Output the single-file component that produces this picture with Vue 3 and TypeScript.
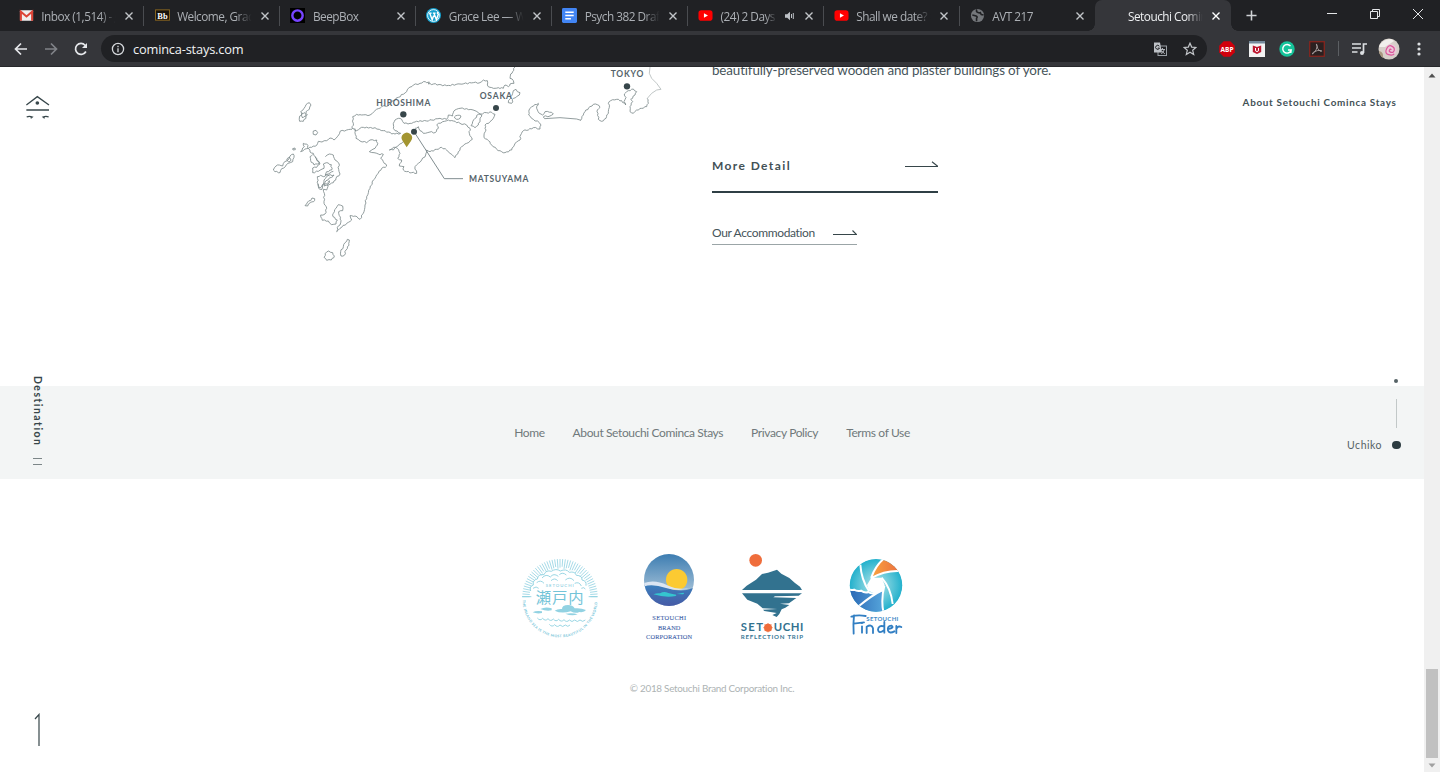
<script setup lang="ts">
interface Tab {
  title: string
  icon: string
  active?: boolean
  audio?: boolean
}

const tabs: Tab[] = [
  { title: 'Inbox (1,514) - g', icon: 'gmail' },
  { title: 'Welcome, Grace', icon: 'bb' },
  { title: 'BeepBox', icon: 'beep' },
  { title: 'Grace Lee — Wo', icon: 'wp' },
  { title: 'Psych 382 Draft', icon: 'docs' },
  { title: '(24) 2 Days', icon: 'yt', audio: true },
  { title: 'Shall we date? O', icon: 'yt' },
  { title: 'AVT 217', icon: 'globe' },
  { title: 'Setouchi Cominca', icon: 'none', active: true },
]

const footerLinks = ['Home', 'About Setouchi Cominca Stays', 'Privacy Policy', 'Terms of Use']

// Coastlines as rough vertices; coast() adds the small bays between them.
const coasts: string[] = [
  '276,205 280,190 278,170 290,163 305,165 330,165 345,152 365,140 385,137 400,122 415,112 440,95 445,85 460,75 480,70 490,65 500,68 508,66 505,72 520,72 560,77 600,72 640,68 660,68 670,60 682,62 682,75 690,82 700,85 715,83 730,85 735,75 745,80 750,72 762,70 760,62 750,55 752,42 758,35 765,21',
  '755,130 745,128 752,110 758,100 760,92 768,88 772,95 780,98 778,105 770,110 760,115 755,130',
  '276,205 290,212 300,205 310,202 325,204 345,203 358,208 370,212 385,216 395,222 405,222 422,220 405,212 400,205 400,190 405,180 415,175 425,178 432,190 450,190 465,186 480,182 500,183 515,180 540,175 560,178 565,165 578,168 580,158 585,150 600,145 620,146 645,152 660,162 680,158 695,157 705,163 700,175 690,185 675,195 678,210 672,225 672,233 685,242 695,255 710,268 725,275 735,278 755,270 765,250 780,240 782,225 790,212 805,210 820,203 840,207 843,195 838,188 820,178 806,165 807,150 815,140 835,130 830,145 838,160 848,165 855,155 875,157 880,162 870,168 850,170',
  '1162,115 1165,130 1160,140 1145,145 1130,150 1120,160 1110,155 1110,140 1118,125 1112,118 1125,105 1130,95 1120,87 1105,92 1093,102 1098,112 1092,125 1097,135 1085,122 1070,118 1052,122 1045,130 1048,142 1045,155 1038,175 1025,184 1015,178 1014,160 1012,150 1020,142 1012,134 1000,133 990,140 975,155 970,165 962,181',
  '665,165 655,163 645,175 638,185 633,197 645,203 655,195 660,180 665,165',
  '583,171 592,166 603,168 600,175 590,178 583,171',
  '465,205 475,200 480,212 490,220 510,216 525,218 535,205 530,195 548,185 565,180 580,183 600,190 620,195 630,205 628,220 637,238 620,250 605,260 595,275 585,293 570,280 560,270 545,262 530,268 510,275 500,270 497,285 485,300 475,310 465,320 470,340 455,338 440,335 430,330 432,320 418,318 425,300 413,295 420,280 412,265 400,262 388,270 400,270 410,260 425,250 440,240',
  '284,205 288,235 300,243 320,248 330,240 350,240 352,255 345,265 328,275 342,278 355,282 370,283 362,295 370,305 380,318 365,325 355,340 340,360 330,385 320,410 315,435 312,455 300,478 285,468 270,467 275,480 260,490 240,505 230,515 232,502 240,495 243,482 238,467 236,455 248,452 248,438 235,434 228,445 220,460 219,470 232,480 228,492 215,494 205,483 187,481 182,465 195,462 200,445 192,430 193,400 190,388',
  '276,208 260,210 240,214 236,225 222,240 210,234 200,242 186,246 175,244 170,256 155,262 140,266 130,272 122,275 133,260 130,250 140,252 146,266 150,276 160,280 165,290 178,310 162,315 152,302 150,290 158,284',
  '165,290 180,312 170,322 158,324 158,338 175,334 192,325 190,312 200,308 214,314 215,330 200,335 196,345 208,348',
  '196,290 208,282 220,285 225,300 237,310 236,328 240,342 228,355 220,368 205,375 192,378 198,362 215,352 222,345 205,346 192,360 190,372 180,384 174,372 172,350 182,346 190,350 205,342 220,334',
  '174,372 176,385 186,388 188,374 200,372 208,362 200,390 190,388',
  '148,128 153,135 148,148 138,155 142,165 130,184 119,184 118,174 126,160 122,155 132,145 138,134 148,128',
  '125,160 134,158 138,168 128,174 125,160',
  '160,213 168,211 173,218 168,225 160,223 160,213',
  '98,266 105,264 106,269 99,270 98,266',
  '40,330 48,318 58,315 68,318 74,305 84,300 90,288 100,282 102,292 98,305 84,310 76,320 65,326 60,338 45,335 40,330',
  '88,292 93,300 86,306 80,300 88,292',
  '135,437 143,426 152,422 156,414 164,416 161,425 151,428 143,438 135,437',
  '196,580 206,573 218,578 223,588 214,600 200,601 192,592 196,580',
  '262,538 268,540 267,556 258,570 253,586 243,588 242,575 250,560 255,548 262,538',
]

function coast(points: string): string {
  const p = points.split(' ').map((s) => s.split(',').map(Number))
  let d = `M${p[0][0]} ${p[0][1]}`
  for (let i = 1; i < p.length; i++) {
    const [ax, ay] = p[i - 1]
    const [bx, by] = p[i]
    const len = Math.hypot(bx - ax, by - ay) || 1
    const steps = Math.max(1, Math.round(len / 6))
    for (let k = 1; k < steps; k++) {
      const t = k / steps
      const n = Math.sin(ax * 3.1 + by * 5.7 + k * 2.4) * 1.9
      d += `L${(ax + (bx - ax) * t - ((by - ay) / len) * n).toFixed(1)} ${(ay + (by - ay) * t + ((bx - ax) / len) * n).toFixed(1)}`
    }
    d += `L${bx} ${by}`
  }
  return d
}

const rays = Array.from({ length: 45 }, (_, i) => {
  const a = Math.PI + (i * Math.PI) / 44
  const side = Math.abs(Math.cos(a))
  const inner = side > 0.8 ? 91 : 84 + (i % 3) * 3
  return {
    x1: 180 + Math.cos(a) * inner,
    y1: 170 + Math.sin(a) * inner,
    x2: 180 + Math.cos(a) * 113,
    y2: 170 + Math.sin(a) * 113,
  }
})
</script>

<template>
  <div class="window">
    <header class="chrome">
      <div class="tabstrip">
        <div v-for="(tab, i) in tabs" :key="i" class="tab" :class="{ active: tab.active, last: i === 7 }">
          <svg class="favicon" viewBox="0 0 16 16">
            <g v-if="tab.icon === 'gmail'">
              <rect x="1" y="2.5" width="14" height="11" rx="1" fill="#f1eeee" />
              <path d="M2 13.5V4l6 5 6-5v9.500" fill="none" stroke="#dc4437" stroke-width="2.200" />
            </g>
            <g v-else-if="tab.icon === 'bb'">
              <rect x=".6" y="2" width="14.800" height="11" fill="#17130c" stroke="#8d6a20" />
              <text x="8" y="11.200" text-anchor="middle" class="bb">Bb</text>
            </g>
            <g v-else-if="tab.icon === 'beep'">
              <rect width="16" height="16" fill="#000" />
              <circle cx="8" cy="8" r="5.500" fill="none" stroke="#7744ff" stroke-width="2.600" />
            </g>
            <g v-else-if="tab.icon === 'wp'">
              <circle cx="8" cy="8" r="8" fill="#14a0ce" />
              <circle cx="8" cy="8" r="6.300" fill="none" stroke="#fff" stroke-width=".9" />
              <path d="M3 5.500h3M7.300 5.500h3M4 5.500l2.600 7L8.200 8M8.500 5.500l2.600 7 2-5.800q-1.500-1-.8-2.500" fill="none" stroke="#fff" stroke-width="1.500" />
            </g>
            <g v-else-if="tab.icon === 'docs'">
              <rect width="16" height="16" rx="1.500" fill="#4285f4" />
              <path d="M3.500 4.500h9M3.500 8h9M3.500 11.500h6" stroke="#fff" stroke-width="1.600" />
            </g>
            <g v-else-if="tab.icon === 'yt'">
              <rect x=".5" y="2.300" width="15" height="11.400" rx="3" fill="#f00" />
              <path d="M6.300 5.500v5l4.300-2.500z" fill="#fff" />
            </g>
            <g v-else-if="tab.icon === 'globe'">
              <circle cx="8" cy="8" r="7" fill="#74777b" />
              <path d="M2.500 7.500l4 1q2 1 .5 2.500v3M7.500 1.500q-1.500 2 .5 3t3 .5l1 2 2.500.5" fill="none" stroke="#202124" stroke-width="1.700" />
            </g>
          </svg>
          <span class="title" :class="{ short: tab.audio }">{{ tab.title }}</span>
          <svg v-if="tab.audio" class="audio" viewBox="0 0 12 12">
            <path d="M1 4.300h2.200L6 1.800v8.400L3.200 7.700H1z" fill="#bdc1c6" />
            <path d="M7.500 4v4M9.300 3v6" stroke="#bdc1c6" fill="none" />
          </svg>
          <svg class="close" viewBox="0 0 10 10"><path d="M1.500 1.500l7 7m0-7l-7 7" /></svg>
        </div>
        <svg class="plus" viewBox="0 0 12 12"><path d="M6 .5v11M.5 6h11" /></svg>
        <div class="winctl">
          <svg viewBox="0 0 12 12"><path d="M1 5.500h10" /></svg>
          <svg viewBox="0 0 12 12"><path d="M1.500 3.500h7v7h-7zM3.500 3.300V1.500h7v7h-1.800" /></svg>
          <svg viewBox="0 0 12 12"><path d="M1 1l10 10M11 1L1 11" /></svg>
        </div>
      </div>
      <div class="toolbar">
        <div class="navicons">
          <svg viewBox="0 0 16 16"><path d="M14 8H3M8 2.500L2.500 8 8 13.500" /></svg>
          <svg class="dim" viewBox="0 0 16 16"><path d="M2 8h11M8 2.500L13.500 8 8 13.500" /></svg>
          <svg viewBox="0 0 16 16"><path d="M12.900 10.500a5.500 5.500 0 1 1-.8-6.300l1.400 1.500" /><path d="M14 2v5H9z" class="solid" /></svg>
        </div>
        <div class="omnibox">
          <svg class="info" viewBox="0 0 14 14"><circle cx="7" cy="7" r="5.600" /><path d="M7 6.300v4M7 3.800v1.400" /></svg>
          <span class="url">cominca-stays.com</span>
          <svg class="translate" viewBox="0 0 14 14">
            <rect x="5" y="4" width="8.500" height="9.500" fill="none" stroke="#9aa0a6" />
            <path d="M7 7.500h5M9.500 6v1.500M11.300 7.500q-1 3-3 4.500M8.300 8.500l3.500 3.500" stroke="#bdc1c6" fill="none" stroke-width=".9" />
            <path d="M1 .5h6l2 10H1z" fill="#bdc1c6" />
            <path d="M6.300 4.200a2 2 0 1 0 .2 1.900H4.800" fill="none" stroke="#202124" />
          </svg>
          <svg class="star" viewBox="0 0 14 14"><path d="M7 1.200l1.700 3.900 4.200.4-3.200 2.800 1 4.200L7 10.300l-3.700 2.200 1-4.200L1.100 5.500l4.200-.4z" /></svg>
        </div>
        <div class="extensions">
          <svg viewBox="0 0 16 16">
            <path d="M4.700.2h6.600l4.500 4.500v6.600l-4.500 4.500H4.700L.2 11.300V4.700z" fill="#d0000c" />
            <text x="8" y="10.500" text-anchor="middle" class="abp">ABP</text>
          </svg>
          <svg viewBox="0 0 16 16">
            <rect width="16" height="16" fill="#f3f3f3" /><rect width="16" height="2.500" fill="#74899b" />
            <path d="M3.800 4.500l4.200 1.500 4.200-1.500v6.500L8 13 3.800 11z" fill="#bd1730" /><path d="M6.500 7v2.800L8 10.600l1.500-.8V7" fill="none" stroke="#fff" stroke-width="1" />
          </svg>
          <svg viewBox="0 0 16 16">
            <circle cx="8" cy="8" r="7.700" fill="#15c39a" />
            <path d="M11.500 5.200A4.300 4.300 0 1 0 12.200 9H9M12.200 9l-.4 3" fill="none" stroke="#fff" stroke-width="1.400" />
          </svg>
          <svg viewBox="0 0 16 16">
            <rect x=".7" y=".7" width="14.600" height="14.600" fill="#2b2020" stroke="#84251f" stroke-width="1.300" />
            <path d="M7.500 3q1.500 2-.3 5.500T3.500 13q-1-.7 2-2.400t7-1q1 1.200-1.500.5Q8.500 8.800 7.300 3z" fill="none" stroke="#aaa0a0" stroke-width=".9" />
          </svg>
        </div>
        <i class="divider"></i>
        <svg class="queue" viewBox="0 0 16 14"><path d="M1 2h9M1 6h9M1 10h5.500M12.500 11V2H16" /><circle cx="11" cy="11" r="2" /></svg>
        <svg class="avatar" viewBox="0 0 22 22">
          <circle cx="11" cy="11" r="10.500" fill="#d6cfc9" />
          <path d="M1 9Q4 1 13 1l3 2-9 6z" fill="#f1efec" /><path d="M1 13q5 1 4 7Q1 17 1 13z" fill="#a8977f" />
          <circle cx="13" cy="12" r="5.700" fill="#ecc7d8" />
          <path d="M13.200 12q-.7-1.600-1.700 0t1.500 2.300 3.200-2-2.500-4.200-5.200 3 2.200 5.600 5.500-1" fill="none" stroke="#d9579a" stroke-width="1.200" />
        </svg>
        <svg class="menu" viewBox="0 0 4 16"><circle cx="2" cy="3" r="1.600" /><circle cx="2" cy="8" r="1.600" /><circle cx="2" cy="13" r="1.600" /></svg>
      </div>
    </header>

    <div class="viewport">
      <main class="page">
        <section class="destination">
          <svg class="map" viewBox="0 21 1230 609">
            <path v-for="(c, i) in coasts" :key="i" :d="coast(c)" class="shore" />
            <path d="M850 171L854 176L900 173L950 177L963 181" class="shore" />
            <path d="M1162 115L1175 100L1190 90L1203 88L1190 70L1175 55L1168 40L1170 21" class="shore light" />
            <path d="M462 215L553 356H609" class="lead" />
            <circle cx="430" cy="163" r="9.500" /><circle cx="462" cy="215" r="9" />
            <circle cx="708" cy="144" r="9" /><circle cx="1101" cy="79" r="9.500" />
            <path d="M440 262L428 243A15.500 15.500 0 1 1 453 243Z" class="pin" />
            <text x="349" y="137" textLength="162">HIROSHIMA</text>
            <text x="659" y="116" textLength="97">OSAKA</text>
            <text x="1052" y="52" textLength="98">TOKYO</text>
            <text x="627" y="365" textLength="178">MATSUYAMA</text>
          </svg>
          <div class="copy">
            <p>beautifully-preserved wooden and plaster buildings of yore.</p>
            <a class="more">
              <span>More Detail</span>
              <svg viewBox="0 0 33 7"><path d="M0 5.500H33L27 .8" /></svg>
            </a>
            <a class="stay">
              <span>Our Accommodation</span>
              <svg viewBox="0 0 24 7"><path d="M0 5.500H23.500L19.500 1.500" /></svg>
            </a>
          </div>
        </section>

        <nav class="links">
          <a v-for="l in footerLinks" :key="l">{{ l }}</a>
        </nav>

        <footer class="footer">
          <div class="logos">
            <svg width="80" height="90" viewBox="60 36 240 270" class="seal">
              <line v-for="(r, i) in rays" :key="i" v-bind="r" stroke-width="2.300" />
              <path d="M92 153q-5-14 8-18q-3-15 12-18q3-16 20-13q6-15 22-10q14-10 27-1q17-8 27 4q17-4 21 9q18 0 17 14q14 2 12 17M110 128q12-10 22 2M126 114q12-14 25-3q10-13 24-2M178 104q10-9 21 1M196 120q14-12 26 2M224 130q14-6 20 8M99 145q10-8 17 0M153 122q11-10 20 0M244 145q8-5 12 2M66 170h28M266 170h26" class="line" />
              <text x="137" y="140" textLength="84" class="seal-small">SETOUCHI</text>
              <text x="107" y="188" textLength="144" class="seal-kanji">瀬戸内</text>
              <path d="M98 217q10-6 28-3v5q-15 3-28-2M121 207q15-8 34-2v6q-18 3-34-4M164 212q8-6 22-5q0-12 18-12q14 0 20 10q18-2 34 5q-5 8-20 6q-12 6-26-2q-28 8-48-2M196 221q22-4 37 2q-18 6-37-2" class="fill" />
              <path d="M112 234q8 10 16 1q8 10 16 1q8 10 16 1q8 10 16 1q8 10 16 1q8 10 16 1q8 9 16 0q8 9 16 0q8 8 16 0M148 253q8 10 16 1q8 10 16 1q8 9 16 0q8 8 14 0" class="line" />
              <path id="sealArc" d="M68 180A112 112 0 0 0 292 180" fill="none" />
              <text class="seal-ring"><textPath href="#sealArc" textLength="345">THE INLAND SEA IS THE MOST BEAUTIFUL IN THE WORLD</textPath></text>
            </svg>

            <svg width="54" height="90" viewBox="426 36 162 270">
              <defs>
                <linearGradient id="sky" x2="0" y2="1"><stop stop-color="#3b7cb1" /><stop offset=".65" stop-color="#98b9d3" /></linearGradient>
                <linearGradient id="sea" x2="0" y2="1"><stop stop-color="#3c80bd" /><stop offset="1" stop-color="#4659a5" /></linearGradient>
                <clipPath id="disc"><ellipse cx="507" cy="120" rx="75" ry="78" /></clipPath>
              </defs>
              <g clip-path="url(#disc)">
                <rect x="430" y="40" width="155" height="160" fill="url(#sky)" />
                <circle cx="530" cy="119" r="32" fill="#fcca32" />
                <path d="M430 136Q465 128 505 144T585 142V200H430z" fill="url(#sea)" />
                <path d="M430 130Q463 117 502 136T585 140Q540 158 498 144T430 140z" fill="#dbe5f2" />
                <path d="M460 163q10-4 20-3q12-8 25-1l16 4q12 1 6 5q-30 6-67-5M530 162l20-4q5 3-2 5z" fill="#35c5cf" />
              </g>
              <g class="brand"><text x="457" y="241" textLength="101">SETOUCHI</text><text x="474" y="269" textLength="67">BRAND</text><text x="438" y="297" textLength="138">CORPORATION</text></g>
            </svg>

            <svg width="67" height="90" viewBox="54 36 201 270">
              <circle cx="107" cy="61" r="19" fill="#ef6d3b" />
              <path d="M66 150L80 137L108 119L126 102L144 98L162 92L171 89L184 101L208 114L224 128L240 140L246 150z" fill="#32728f" />
              <path d="M66 160H246L236 167L165 169L160 172L229 174L207 190L180 191L208 195L196 203L185 208L178 222L170 231L157 225L170 219L133 213L129 209L172 207L128 205L112 191L82 179z" fill="#32728f" />
              <text x="62" y="274" textLength="67" class="trip">SET</text><circle cx="144" cy="263" r="12" fill="#ef6d3b" /><text x="161" y="274" textLength="89" class="trip">UCHI</text>
              <path d="M144 249v4m0 20v4m-14-14h4m20 0h4m-24-10l3 3m14 14l3 3m-20 0l3-3m14-14l3-3" stroke="#ef6d3b" stroke-width="2.500" />
              <text x="62" y="297" textLength="187" class="trip-small">REFLECTION TRIP</text>
            </svg>

            <svg width="58" height="90" viewBox="381 36 174 270">
              <defs>
                <radialGradient id="aqua" cx="468" cy="136" r="80" gradientUnits="userSpaceOnUse"><stop offset=".2" stop-color="#9bdce4" /><stop offset="1" stop-color="#21b0cc" /></radialGradient>
                <linearGradient id="warm"><stop stop-color="#f9a43f" /><stop offset="1" stop-color="#e9683f" /></linearGradient>
                <linearGradient id="deep"><stop stop-color="#2863b2" /><stop offset="1" stop-color="#55a5db" /></linearGradient>
                <clipPath id="lens"><circle cx="468" cy="136" r="79" /></clipPath>
              </defs>
              <g clip-path="url(#lens)">
                <circle cx="468" cy="136" r="80" fill="url(#aqua)" />
                <path d="M454 112Q467 75 493 56L550 93Q500 90 454 112z" fill="url(#warm)" />
                <path d="M380 149q12 4 22 2q10 6 21 3q12 8 22 4q10 7 22 3l22-10q-5 35 1 66H430L380 180z" fill="url(#deep)" />
                <path d="M380 147q12 4 22 2q10 6 21 3q12 8 22 4q10 7 22 3" fill="none" stroke="#fff" stroke-width="6" />
                <path d="M421 74Q424 120 447 153M454 112Q467 75 496 52M452 115Q500 88 550 94M485 113Q513 145 518 192M493 137Q482 180 491 220M488 150Q455 166 416 199" class="blades" />
                <path d="M454 113L485 113L494 135L488 153L467 161L448 154L441 135z" fill="#fff" />
              </g>
              <text x="439" y="242" textLength="96" class="finder-small">SETOUCHI</text>
              <path d="M402 226Q399 252 401 281M394 230Q413 223 437 228M401 251L432 247M426 259V278M426 249v.5M440 279V260Q455 251 459 265V279M492 259Q475 255 474 269Q476 283 493 270M493 246V278M504 267Q525 263 514 257Q501 258 504 272Q509 282 523 274M529 258V279M529 267Q534 256 544 261" class="finder" />
            </svg>
          </div>
          <p class="copyright">© 2018 Setouchi Brand Corporation Inc.</p>
        </footer>
      </main>

      <svg class="brandmark" viewBox="78 284 72 72"><path d="M79 314L112 289L147 314M79 329H147M80 350q8-4 17 0l-5 4M146 350q-8-4-17 0l5 4" /><circle cx="112" cy="308" r="5.500" /></svg>
      <a class="about">About Setouchi Cominca Stays</a>
      <div class="side"><span>Destination</span><i></i><i></i></div>
      <div class="pager"><i class="dot"></i><i class="rule"></i><div class="current"><span>Uchiko</span><i></i></div></div>
      <svg class="totop" viewBox="0 0 8 34"><path d="M1 6L5 1.500V33" /></svg>

      <div class="scrollbar">
        <svg viewBox="0 0 16 16"><path d="M4.500 10.500L8 6.500l3.500 4z" fill="#505050" /></svg>
        <i></i>
        <svg viewBox="0 0 16 16"><path d="M4.500 7.500L8 11.500l3.500-4z" fill="#a0a0a0" /></svg>
      </div>
    </div>
  </div>
</template>

<style>
html, body { margin: 0; overflow: hidden; background: #fff; }
</style>

<style scoped>
.window { width: 1440px; height: 772px; overflow: hidden; font-family: Lato, sans-serif; font-variant-ligatures: none; color: #37464a; }
svg { display: block; flex: none; }
p { margin: 0; }

.chrome { height: 67px; background: #35363a; font-family: "Open Sans", "Noto Sans", sans-serif; box-sizing: border-box; border-bottom: 1px solid #27282b; }
.tabstrip { height: 31px; background: #202124; display: flex; padding-left: 8.600px; position: relative; }
.tab { width: 135.850px; height: 31px; box-sizing: border-box; display: flex; align-items: center; padding-left: 10.200px; border-right: 1px solid transparent; border-image: linear-gradient(transparent 7px, #4a4c50 7px, #4a4c50 25px, transparent 25px) 1; position: relative; }
.tab.last { border-image: none; }
.tab.active { background: #35363a; border-image: none; border-radius: 7px 7px 0 0; }
.tab.active::before, .tab.active::after { content: ""; position: absolute; bottom: 0; width: 7px; height: 7px; }
.tab.active::before { left: -7px; background: radial-gradient(circle at 0 0, transparent 6.500px, #35363a 7px); }
.tab.active::after { right: -8px; background: radial-gradient(circle at 100% 0, transparent 6.500px, #35363a 7px); }
.favicon { width: 15px; height: 15px; margin-right: 7.500px; }
.bb { font: bold 9px "Liberation Serif", serif; fill: #fff; }
.title { width: 77px; font-size: 11.800px; letter-spacing: -.5px; line-height: 18px; color: #acb0b5; white-space: nowrap; overflow: hidden; mask-image: linear-gradient(90deg, #000 76%, transparent 97%); }
.title.short { width: 58px; margin-right: 5px; }
.active .title { color: #eef0f2; }
.audio { width: 12px; height: 12px; margin-right: 2px; }
.close { width: 10px; height: 10px; margin-left: 6px; stroke: #c2c5c9; stroke-width: 1.400; }
.active .close { stroke: #fff; }
.plus { width: 11px; height: 11px; margin: 10px 0 0 15px; stroke: #d0d3d6; stroke-width: 1.700; }
.winctl { margin-left: auto; display: flex; gap: 31px; padding: 8px 16px 0 0; }
.winctl svg { width: 12px; height: 12px; fill: none; stroke: #e4e6e8; }

.toolbar { height: 35px; display: flex; align-items: center; }
.navicons { display: flex; gap: 14px; padding-left: 13px; width: 88px; }
.navicons svg { width: 16px; height: 16px; fill: none; stroke: #e6e8eb; stroke-width: 1.700; }
.navicons .dim { stroke: #808388; }
.navicons .solid { fill: #e6e8eb; stroke: none; }
.omnibox { width: 1106px; height: 27px; border-radius: 14px; background: #202124; display: flex; align-items: center; box-sizing: border-box; padding: 0 10px; }
.info { width: 14px; height: 14px; fill: none; stroke: #d5d8dc; stroke-width: 1.300; }
.url { font-size: 12.800px; letter-spacing: -.18px; color: #f1f3f4; margin-left: 8px; flex: 1; line-height: 18px; }
.translate { width: 14px; height: 14px; margin-right: 16px; }
.star { width: 14px; height: 14px; fill: none; stroke: #c2c5c9; stroke-width: 1.200; }
.extensions { display: flex; gap: 14px; margin-left: 12px; }
.extensions svg { width: 16px; height: 16px; }
.abp { font: bold 6.500px "Open Sans", sans-serif; fill: #fff; }
.divider { width: 1px; height: 15px; background: #5c5f63; margin: 0 12px 0 13px; }
.queue { width: 16px; height: 14px; fill: none; stroke: #dcdfe2; stroke-width: 1.700; }
.queue circle { fill: #dcdfe2; stroke: none; }
.avatar { width: 22px; height: 22px; margin: 0 17px 0 11px; }
.menu { width: 4px; height: 16px; fill: #dcdfe2; }

.viewport { position: relative; height: 705px; display: flex; background: #fff; }
.page { width: 1424px; }
.destination { height: 318.500px; display: flex; overflow: hidden; }
.map { width: 410px; height: 203px; margin-left: 260px; }
.map circle { fill: #37464a; }
.map .pin { fill: #a39531; }
.map text { font-size: 25.500px; font-weight: 700; fill: #55636a; }
.shore { fill: none; stroke: #7c898a; stroke-width: 2.500; stroke-linejoin: round; }
.shore.light { stroke: #b3bbbb; }
.lead { fill: none; stroke: #68767a; stroke-width: 2.500; }
.copy { margin-left: 42px; display: flex; flex-direction: column; align-items: flex-start; }
.copy p { font-size: 13.400px; letter-spacing: -.14px; line-height: 20px; margin-top: -7px; white-space: nowrap; color: #46545a; }
.more { width: 225.500px; height: 33px; margin-top: 78px; border-bottom: 2px solid #2f3f45; display: flex; justify-content: space-between; align-items: flex-start; font-size: 12px; font-weight: 700; letter-spacing: 1.400px; line-height: 16px; color: #435156; }
.more svg { width: 33px; height: 7px; margin-top: 3px; }
.more svg, .stay svg { fill: none; stroke: #37464a; stroke-width: 1.100; }
.stay { width: 145px; height: 19px; margin-top: 32px; border-bottom: 1px solid #9ba5a7; display: flex; justify-content: space-between; font-size: 12px; letter-spacing: -.35px; line-height: 16px; color: #46545a; }
.stay svg { width: 24px; height: 7px; margin-top: 4px; }

.links { height: 93.500px; background: #f3f5f5; display: flex; justify-content: center; gap: 28px; font-size: 12px; letter-spacing: -.38px; line-height: 94px; color: #70797b; }
.footer { display: flex; flex-direction: column; align-items: center; padding-top: 73px; }
.logos { display: flex; gap: 42px; padding-left: 1px; }
.seal line, .seal .line { stroke: #8acfdf; fill: none; }
.seal .line { stroke-width: 2.600; }
.seal .fill { fill: #92d2e2; }
.seal text { fill: #73c4d8; }
.seal-small { font: 13px Lato, sans-serif; }
.seal-kanji { font: 46px "Noto Sans CJK JP", sans-serif; }
.seal-ring { font: bold 10.500px Lato, sans-serif; }
.brand { font: 19px "Liberation Serif", serif; fill: #3e62a8; stroke: #3e62a8; stroke-width: .3; }
.trip { font: bold 34px Lato, sans-serif; fill: #32728f; }
.trip-small { font: bold 18.500px Lato, sans-serif; fill: #397996; }
.blades { fill: none; stroke: #fff; stroke-width: 6; }
.finder-small { font: bold 18px Lato, sans-serif; fill: #438bc7; }
.finder { fill: none; stroke: #327fc3; stroke-width: 5.500; stroke-linecap: round; stroke-linejoin: round; }
.copyright { margin-top: 38px; font-size: 9.900px; letter-spacing: -.27px; line-height: 16px; color: #adb3b4; }

.brandmark { position: absolute; left: 26px; top: 27.500px; width: 24px; height: 24px; fill: none; stroke: #37464a; stroke-width: 4; }
.brandmark circle { fill: #37464a; stroke: none; }
.about { position: absolute; right: 43.500px; top: 27px; font-size: 9.900px; font-weight: 700; letter-spacing: .7px; line-height: 16px; color: #435156; }
.side { position: absolute; left: 30px; top: 309px; width: 15px; display: flex; flex-direction: column; align-items: center; }
.side span { writing-mode: vertical-rl; font-size: 10.400px; font-weight: 700; letter-spacing: 1.500px; line-height: 15px; height: 82px; }
.side i { width: 9px; height: 1px; background: #7c8688; margin-bottom: 5px; }
.pager { position: absolute; right: 39.500px; top: 311.500px; display: flex; flex-direction: column; align-items: flex-end; }
.dot { width: 4px; height: 4px; border-radius: 50%; background: #566266; margin-right: 2.500px; }
.rule { width: 1px; height: 29px; margin: 16.500px 3.500px 9px 0; background: #c2c8c8; }
.current { display: flex; align-items: center; gap: 10px; font-size: 10.500px; letter-spacing: .5px; line-height: 16px; color: #566266; }
.current i { width: 8.500px; height: 8.500px; border-radius: 50%; background: #2c3b40; }
.totop { position: absolute; left: 34px; top: 646px; width: 8px; height: 34px; fill: none; stroke: #37464a; stroke-width: 1.200; }
.scrollbar { width: 16px; background: #f0f0f0; display: flex; flex-direction: column; align-items: center; }
.scrollbar svg { width: 16px; height: 16px; }
.scrollbar i { width: 12px; height: 89px; background: #c1c1c1; margin: auto 0 -2px; }
</style>
